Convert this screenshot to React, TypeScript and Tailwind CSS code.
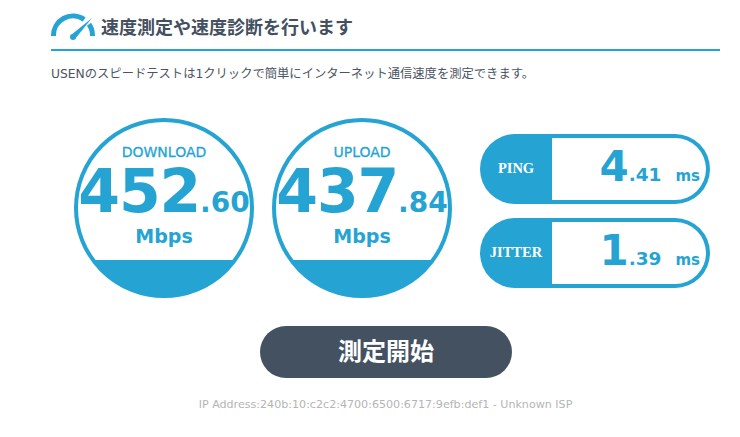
const fontStack = { fontFamily: '"DejaVu Sans", "Noto Sans CJK JP", sans-serif' };

function Gauge({ label, whole, frac }: { label: string; whole: string; frac: string }) {
  return (
    <div className="flex h-[180px] w-[180px] flex-col items-center rounded-full border-4 border-[#25a4d3] bg-[linear-gradient(#ffffff_138px,#25a4d3_138px)] text-[#25a4d3]">
      <div className="mt-[21px] h-[18px] text-[14px] leading-[18px] [-webkit-text-stroke:0.3px_#25a4d3]">{label}</div>
      <div className="mt-[2px] flex h-[56px] items-baseline whitespace-nowrap font-bold leading-[56px]">
        <span className="text-[60px] tracking-[-1.2px]">{whole}</span>
        <span className="text-[28px]">.{frac}</span>
      </div>
      <div className="mt-[3px] h-[28px] text-[19px] font-bold leading-[28px]">Mbps</div>
    </div>
  );
}

function Pill({ label, whole, frac }: { label: string; whole: string; frac: string }) {
  return (
    <div className="flex h-[70px] w-[230px] rounded-full bg-[#25a4d3] p-[4px] pl-0 text-[#25a4d3]">
      <div
        className="flex w-[72px] shrink-0 items-center justify-center text-[14.5px] font-bold text-white"
        style={{ fontFamily: '"Liberation Serif", serif' }}
      >
        {label}
      </div>
      <div className="flex flex-1 items-baseline justify-end whitespace-nowrap rounded-r-full bg-white pr-[6px] font-bold leading-[58px]">
        <span className="text-[42px]">{whole}</span>
        <span className="text-[18.5px]">.{frac}</span>
        <span className="ml-[14px] text-[15px]">ms</span>
      </div>
    </div>
  );
}

export default function App() {
  return (
    <div className="h-[437px] w-[740px] overflow-hidden bg-white pl-[51px] pr-[20px]" style={fontStack}>
      <div className="flex h-[51px] items-end border-b-2 border-[#25a4d3] pb-[8px]">
        <svg width="45" height="28" viewBox="0 0 45 28" className="shrink-0">
          <path d="M2.5 23 A19.5 19.5 0 0 1 33.2 6.5" fill="none" stroke="#25a4d3" strokeWidth="5" />
          <path d="M38 11.3 A19.5 19.5 0 0 1 41.5 23" fill="none" stroke="#25a4d3" strokeWidth="5" />
          <path d="M20 22 L41 5 L24 26 Z" fill="#25a4d3" />
          <circle cx="22" cy="24" r="3" fill="#25a4d3" />
        </svg>
        <h1 className="ml-[5px] text-[18px] font-bold leading-[26px] text-[#44505f]">速度測定や速度診断を行います</h1>
      </div>
      <p className="mt-[14px] h-[18px] text-[12.3px] leading-[18px] text-[#4a5563]">
        USENのスピードテストは1クリックで簡単にインターネット通信速度を測定できます。
      </p>
      <div className="mt-[35px] flex items-start pl-[23px]">
        <Gauge label="DOWNLOAD" whole="452" frac="60" />
        <div className="ml-[18px]">
          <Gauge label="UPLOAD" whole="437" frac="84" />
        </div>
        <div className="ml-[28px] mt-[16px] flex flex-col gap-[14px]">
          <Pill label="PING" whole="4" frac="41" />
          <Pill label="JITTER" whole="1" frac="39" />
        </div>
      </div>
      <div className="mt-[28px] pl-[209px]">
        <button className="flex h-[52px] w-[252px] items-center justify-center rounded-full bg-[#435161] text-[24px] font-bold text-white">
          測定開始
        </button>
      </div>
      <p className="mt-[19px] w-[669px] text-center text-[11.1px] leading-[16px] text-[#b5b5b5]">
        IP Address:240b:10:c2c2:4700:6500:6717:9efb:def1 - Unknown ISP
      </p>
    </div>
  );
}
